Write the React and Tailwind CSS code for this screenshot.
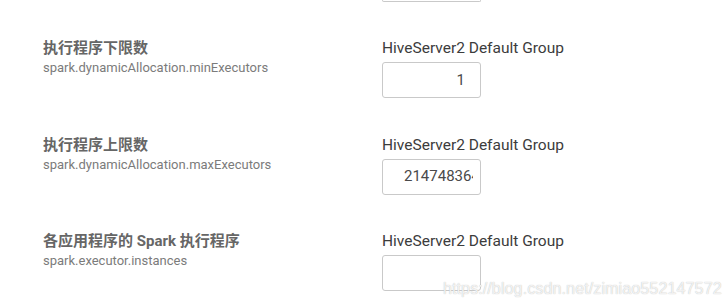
const rows = [
  {
    title: '执行程序下限数',
    prop: 'spark.dynamicAllocation.minExecutors',
    value: '1',
    align: 'right',
  },
  {
    title: '执行程序上限数',
    prop: 'spark.dynamicAllocation.maxExecutors',
    value: '2147483647',
    align: 'left',
  },
  {
    title: '各应用程序的 Spark 执行程序',
    prop: 'spark.executor.instances',
    value: '',
    align: 'right',
  },
]

function ValueBox({ value, align }) {
  return (
    <div className="w-[99px] h-[36px] border border-[#c9c9c9] rounded-[3px] bg-white flex items-center text-[15px] text-[#4a4a4a]">
      {align === 'right' ? (
        <div className="flex-1 text-right pr-[15px]">{value}</div>
      ) : (
        <div className="ml-[21px] w-[69px] overflow-hidden whitespace-nowrap">{value}</div>
      )}
    </div>
  )
}

export default function App() {
  return (
    <div
      className="relative w-[724px] h-[307px] bg-white overflow-hidden"
      style={{ fontFamily: 'Roboto, "Noto Sans CJK SC", sans-serif' }}
    >
      {/* tail of the previous input */}
      <div className="ml-[382px] w-[99px] h-[2px] border border-t-0 border-[#c9c9c9] rounded-b-[3px]" />

      <div className="mt-[34px] pl-[43px]">
        {rows.map((r) => (
          <div key={r.prop} className="grid grid-cols-[339px_1fr] h-[96.5px]">
            <div className="pt-[2px]">
              <div className="text-[15px] leading-[20px] font-bold text-[#666]">{r.title}</div>
              <div className="text-[13px] leading-[16px] mt-[2px] text-[#7b7b7b]">{r.prop}</div>
            </div>
            <div className="pt-[2px]">
              <div className="text-[15.5px] leading-[20px] text-[#3c3c3c] mb-[4px]">HiveServer2 Default Group</div>
              <ValueBox value={r.value} align={r.align} />
            </div>
          </div>
        ))}
      </div>

      {/* watermark */}
      <div
        className="absolute left-[443px] top-[278px] text-[16.3px] leading-[20px] text-white/80 whitespace-nowrap"
        style={{ fontFamily: '"Liberation Sans", Arial, sans-serif', textShadow: '0 0 1px #b0b0b0' }}
      >
        https://blog.csdn.net/zimiao552147572
      </div>
    </div>
  )
}
